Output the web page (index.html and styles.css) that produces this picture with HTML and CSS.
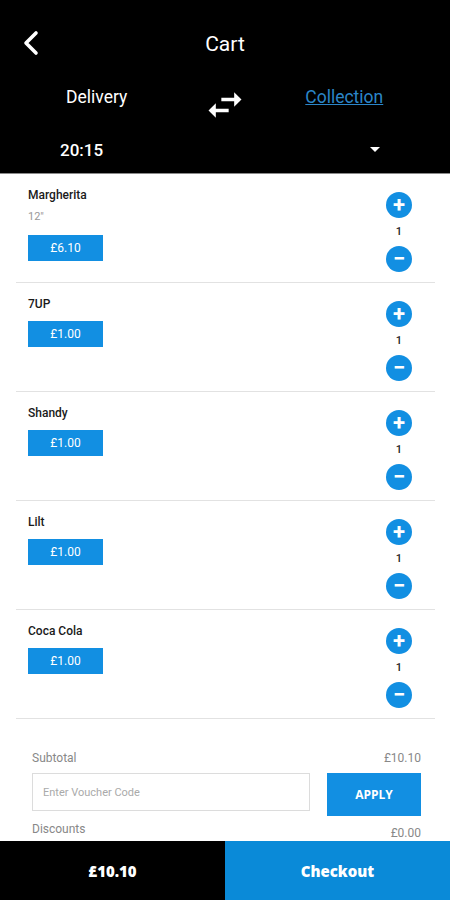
FILE: index.html
```html
<!DOCTYPE html>
<html lang="en">
<head>
  <meta charset="UTF-8">
  <title>Cart</title>
  <link rel="stylesheet" href="styles.css">
</head>
<body>

  <div class="header">
    <div class="title-bar">
      <svg class="back" width="20" height="28" viewBox="0 0 20 28">
        <polyline points="13,3 3,13 13,23" fill="none" stroke="#fff" stroke-width="3.6" stroke-linecap="round" stroke-linejoin="round"/>
      </svg>
      <h1>Cart</h1>
    </div>
    <div class="mode-row">
      <span class="mode">Delivery</span>
      <svg class="swap" width="44" height="44" viewBox="0 0 24 24">
        <path fill="#fff" d="M6.99 11L3 15l3.99 4v-3H14v-2H6.99v-3zM21 9l-4-4v3h-7v2h7v3l4-4z"/>
      </svg>
      <a class="mode link" href="#">Collection</a>
    </div>
    <div class="time-row">
      <span class="time">20:15</span>
      <span class="caret"></span>
    </div>
  </div>

  <div class="items">
    <div class="item">
      <div class="info">
        <div class="name">Margherita</div>
        <div class="sub">12"</div>
        <div class="price">£6.10</div>
      </div>
      <div class="qty">
        <span class="round">+</span>
        <span class="count">1</span>
        <span class="round">&minus;</span>
      </div>
    </div>
    <div class="item">
      <div class="info">
        <div class="name">7UP</div>
        <div class="price">£1.00</div>
      </div>
      <div class="qty">
        <span class="round">+</span>
        <span class="count">1</span>
        <span class="round">&minus;</span>
      </div>
    </div>
    <div class="item">
      <div class="info">
        <div class="name">Shandy</div>
        <div class="price">£1.00</div>
      </div>
      <div class="qty">
        <span class="round">+</span>
        <span class="count">1</span>
        <span class="round">&minus;</span>
      </div>
    </div>
    <div class="item">
      <div class="info">
        <div class="name">Lilt</div>
        <div class="price">£1.00</div>
      </div>
      <div class="qty">
        <span class="round">+</span>
        <span class="count">1</span>
        <span class="round">&minus;</span>
      </div>
    </div>
    <div class="item">
      <div class="info">
        <div class="name">Coca Cola</div>
        <div class="price">£1.00</div>
      </div>
      <div class="qty">
        <span class="round">+</span>
        <span class="count">1</span>
        <span class="round">&minus;</span>
      </div>
    </div>
  </div>

  <div class="summary">
    <div class="line">
      <span>Subtotal</span>
      <span>£10.10</span>
    </div>
    <div class="voucher">
      <input type="text" placeholder="Enter Voucher Code">
      <button class="apply">APPLY</button>
    </div>
    <div class="line discounts">
      <span>Discounts</span>
      <span class="amount">£0.00</span>
    </div>
  </div>

  <div class="bottom-bar">
    <div class="total">£10.10</div>
    <div class="checkout">Checkout</div>
  </div>

</body>
</html>
```

FILE: styles.css
```css
body {
  margin: 0;
  font-family: Roboto, "Liberation Sans", sans-serif;
  background: #fff;
  color: #222;
  padding-bottom: 80px;
}

.header {
  background: #000;
  color: #fff;
  height: 173px;
  border-bottom: 1px solid #8a8a8a;
}

.title-bar {
  height: 48px;
  padding-top: 20px;
  display: flex;
  align-items: center;
  justify-content: center;
  position: relative;
}

.back {
  position: absolute;
  left: 23px;
  top: 30px;
}

h1 {
  margin: 0;
  font-size: 21px;
  font-weight: 400;
}

.mode-row {
  height: 58px;
  display: flex;
  align-items: center;
  padding-left: 66px;
}

.mode {
  font-size: 17.5px;
  font-weight: 400;
  color: #fff;
}

.swap {
  margin-left: 76px;
  margin-top: 16px;
}

.link {
  margin-left: 58px;
  color: #2b86c9;
  text-decoration: underline;
}

.time-row {
  height: 47px;
  display: flex;
  align-items: center;
  padding-left: 60px;
}

.time {
  font-size: 17px;
  font-weight: 500;
}

.caret {
  margin-left: 267px;
  width: 0;
  height: 0;
  border-left: 5px solid transparent;
  border-right: 5px solid transparent;
  border-top: 5px solid #fff;
}

.item {
  height: 108px;
  margin: 0 15px 0 16px;
  padding: 0 23px 0 12px;
  border-bottom: 1px solid #e2e2e2;
  display: flex;
  justify-content: space-between;
}

.name {
  margin-top: 13px;
  line-height: 16px;
  font-size: 12px;
  font-weight: 500;
  color: #1a1a1a;
}

.sub {
  margin-top: 5px;
  line-height: 18px;
  font-size: 11px;
  color: #999;
  margin-bottom: 4px;
}

.price {
  margin-top: 9px;
  width: 75px;
  height: 26px;
  line-height: 26px;
  background: #128fe2;
  color: #fff;
  text-align: center;
  font-size: 12px;
}

.qty {
  padding-top: 18px;
  display: flex;
  flex-direction: column;
  align-items: center;
}

.round {
  width: 26px;
  height: 26px;
  border-radius: 50%;
  background: #128fe2;
  color: #fff;
  font-size: 22px;
  font-weight: 700;
  line-height: 25px;
  text-align: center;
}

.count {
  line-height: 28px;
  font-size: 11px;
  font-weight: 500;
}

.summary {
  padding: 31px 29px 0 32px;
}

.line {
  display: flex;
  justify-content: space-between;
  font-size: 12px;
  color: #888;
  line-height: 16px;
}

.voucher {
  display: flex;
  justify-content: space-between;
  margin-top: 7px;
}

.voucher input {
  width: 278px;
  height: 38px;
  box-sizing: border-box;
  border: 1px solid #dcdcdc;
  padding: 0 10px;
  font-family: Roboto, "Liberation Sans", sans-serif;
  font-size: 11px;
  color: #333;
}

.voucher input::placeholder {
  color: #aaa;
}

.apply {
  width: 94px;
  height: 43px;
  border: none;
  background: #128fe2;
  color: #fff;
  font-family: "Open Sans", sans-serif;
  font-weight: 700;
  font-size: 12px;
}

.discounts {
  margin-top: 5px;
}

.discounts .amount {
  margin-top: 4px;
}

.bottom-bar {
  position: fixed;
  left: 0;
  right: 0;
  bottom: 0;
  height: 59px;
  display: flex;
  font-family: "Open Sans", sans-serif;
  font-weight: 800;
  color: #fff;
}

.total {
  width: 225px;
  background: #000;
  display: flex;
  align-items: center;
  justify-content: center;
  font-size: 15px;
}

.checkout {
  flex: 1;
  background: #0a8ad8;
  display: flex;
  align-items: center;
  justify-content: center;
  font-size: 15px;
}
```
